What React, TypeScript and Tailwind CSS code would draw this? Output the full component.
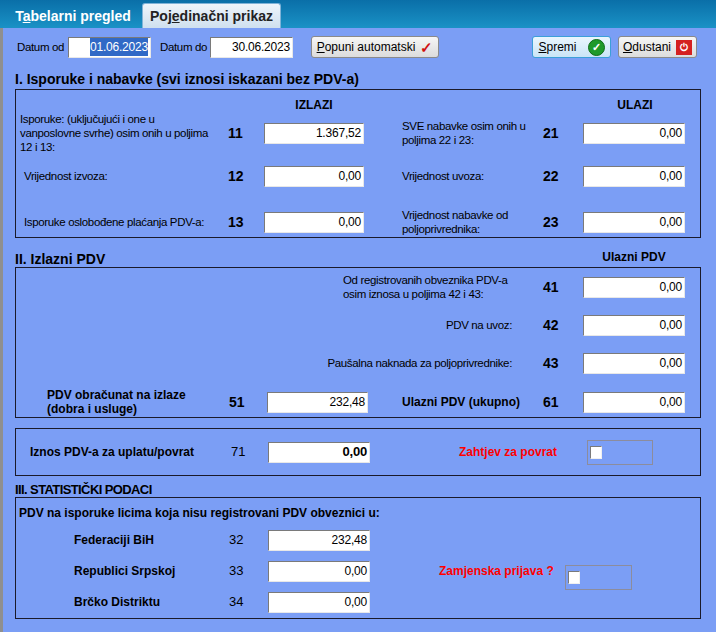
import React from "react";

const F = { fontFamily: '"Liberation Sans", Arial, sans-serif' };

function Inp({ v, w = 100, bold = false, sel = false }: { v: string; w?: number; bold?: boolean; sel?: boolean }) {
  return (
    <div
      style={{ width: w }}
      className={`h-[21px] shrink-0 bg-white border border-t-[#7a7a7a] border-l-[#7a7a7a] border-r-[#e8e8e8] border-b-[#e8e8e8] flex items-center justify-end pr-[2px] text-black tracking-[-0.2px] ${bold ? "font-bold text-[13px]" : "font-normal text-[12px]"}`}
    >
      {sel ? <span className="bg-[#3169c6] text-white">{v}</span> : v}
    </div>
  );
}

function Num({ n, w, pl, bold = true }: { n: string; w: number; pl: number; bold?: boolean }) {
  return (
    <div style={{ width: w, paddingLeft: pl }} className={`shrink-0 ${bold ? "font-bold text-[14px]" : "font-normal text-[13px]"} text-black`}>
      {n}
    </div>
  );
}

function Chk({ w }: { w: number }) {
  return (
    <div style={{ width: w }} className="h-[25px] border border-[#8c8c9c] flex items-center pl-[2px] shrink-0">
      <div className="w-[12px] h-[13px] bg-white border border-t-[#7a7a7a] border-l-[#7a7a7a] border-r-[#f0f0f0] border-b-[#f0f0f0]" />
    </div>
  );
}

function Btn({ children, w, focus = false }: { children: React.ReactNode; w: number; focus?: boolean }) {
  return (
    <div
      style={{ width: w }}
      className={`h-[22px] rounded-[3px] border ${focus ? "border-[#3c9fd8] bg-gradient-to-b from-[#eaf6fd] to-[#c9e4f6]" : "border-[#8a8a8a] bg-gradient-to-b from-[#f6f6f6] to-[#dcdcdc]"} flex items-center justify-center gap-[5px] text-[12px] text-black whitespace-nowrap`}
    >
      {children}
    </div>
  );
}

const L = "text-[11.5px] tracking-[-0.35px] leading-[14px]";

export default function App() {
  return (
    <div style={F} className="w-[716px] h-[632px] bg-[#7b9ef5] overflow-hidden text-black flex flex-col">
      <div className="h-[28px] bg-gradient-to-b from-[#0a6fa8] to-[#1a92c6] flex items-end pl-[4px] shrink-0">
        <div className="h-[24px] w-[138px] flex items-center justify-center text-white font-bold text-[14px] whitespace-nowrap">
          <span>
            T<u>a</u>belarni pregled
          </span>
        </div>
        <div className="h-[25px] w-[139px] bg-gradient-to-b from-[#eef5fb] to-[#cfe0ef] border border-b-0 border-[#7fb3d8] rounded-t-[3px] flex items-center justify-center text-[#222] font-bold text-[14px] whitespace-nowrap">
          <span>
            Poj<u>e</u>dinačni prikaz
          </span>
        </div>
      </div>
      <div className="flex-1 border-l-[3px] border-[#8f8f8f] flex flex-col pl-[12px]">
        <div className="flex items-center h-[22px] mt-[8px] text-[12px] whitespace-nowrap">
          <span className={`ml-[2px] w-[51px] ${L}`}>Datum od</span>
          <Inp v="01.06.2023" w={83} sel />
          <span className={`ml-[9px] w-[50px] ${L}`}>Datum do</span>
          <Inp v="30.06.2023" w={83} />
          <div className="ml-[18px]">
            <Btn w={128}>
              <span>
                <u>P</u>opuni automatski
              </span>
              <span className="text-[#d01010] font-bold text-[15px] leading-none">✓</span>
            </Btn>
          </div>
          <div className="ml-[93px]">
            <Btn w={79} focus>
              <span>
                <u>S</u>premi
              </span>
              <span className="w-[17px] h-[17px] rounded-full bg-[#1f9a2a] border border-[#0d6b15] text-white text-[11px] font-bold flex items-center justify-center ml-[6px]">✓</span>
            </Btn>
          </div>
          <div className="ml-[7px]">
            <Btn w={79}>
              <span>
                <u>O</u>dustani
              </span>
              <span className="w-[16px] h-[15px] bg-[#d42020] text-white text-[10px] font-bold flex items-center justify-center">⏻</span>
            </Btn>
          </div>
        </div>

        <div className="h-[20px] mt-[11px] text-[14px] font-bold flex items-center whitespace-nowrap">I. Isporuke i nabavke (svi iznosi iskazani bez PDV-a)</div>
        <div className="w-[686px] h-[149px] border border-[#1a1a2a] flex flex-col pt-[8px]">
          <div className="h-[14px] flex items-center text-[12px] font-bold">
            <div className="w-[248px]" />
            <div className="w-[100px] text-center">IZLAZI</div>
            <div className="w-[220px]" />
            <div className="w-[102px] text-center">ULAZI</div>
          </div>
          {[
            ["Isporuke: (uključujući i one u vanposlovne svrhe) osim onih u poljima 12 i 13:", "11", "1.367,52", "SVE nabavke osim onih u poljima 22 i 23:", "21", 3, 36],
            ["Vrijednost izvoza:", "12", "0,00", "Vrijednost uvoza:", "22", 8, 36],
            ["Isporuke oslobođene plaćanja PDV-a:", "13", "0,00", "Vrijednost nabavke od poljoprivrednika:", "23", 14, 30],
          ].map(([l, n, v, r, n2, mt, h], i) => (
            <div key={i} style={{ marginTop: mt as number, height: h as number }} className="flex items-center">
              <div className={`w-[204px] ${i === 0 ? "pl-[4px] pr-[4px]" : "pl-[8px] whitespace-nowrap"} ${L}`}>{l}</div>
              <Num n={n as string} w={44} pl={8} />
              <Inp v={v as string} />
              <div className="w-[38px]" />
              <div className={`w-[141px] pr-[10px] ${L}`}>{r}</div>
              <Num n={n2 as string} w={40} pl={0} />
              <Inp v="0,00" w={102} />
            </div>
          ))}
        </div>

        <div className="h-[16px] mt-[13px] flex items-center">
          <div className="w-[568px] text-[14px] font-bold">II. Izlazni PDV</div>
          <div className="w-[102px] text-center text-[12px] font-bold -mt-[4px]">Ulazni PDV</div>
        </div>
        <div className="w-[686px] h-[151px] border border-[#1a1a2a] flex flex-col pt-[4px]">
          {[
            ["Od registrovanih obveznika PDV-a osim iznosa u poljima 42 i 43:", "41", 0],
            ["PDV na uvoz:", "42", 8],
            ["Paušalna naknada za poljoprivrednike:", "43", 8],
          ].map(([l, n, mt], i) => (
            <div key={i} style={{ marginTop: mt as number }} className="h-[30px] flex items-center">
              <div className="w-[304px]" />
              <div className={`w-[192px] ${L} ${i === 0 ? "pl-[23px] pr-[4px] text-left" : "text-right whitespace-nowrap"}`}>{l}</div>
              <div className="w-[31px]" />
              <Num n={n as string} w={40} pl={0} />
              <Inp v="0,00" w={102} />
            </div>
          ))}
          <div className="h-[30px] mt-[9px] flex items-center">
            <div className="w-[212px] pl-[31px] pr-[20px] text-[12px] leading-[14px] font-bold">PDV obračunat na izlaze (dobra i usluge)</div>
            <Num n="51" w={39} pl={1} />
            <Inp v="232,48" w={101} />
            <div className="w-[34px]" />
            <div className="w-[141px] text-[12px] font-bold whitespace-nowrap">Ulazni PDV (ukupno)</div>
            <Num n="61" w={40} pl={0} />
            <Inp v="0,00" w={102} />
          </div>
        </div>

        <div className="w-[686px] h-[48px] mt-[10px] border border-[#1a1a2a] flex items-center text-[12px]">
          <div className="w-[214px] pl-[14px] font-bold whitespace-nowrap">Iznos PDV-a za uplatu/povrat</div>
          <Num n="71" w={38} pl={1} bold={false} />
          <Inp v="0,00" w={102} bold />
          <div className="w-[89px]" />
          <div className="w-[128px] text-[#ff0000] font-bold whitespace-nowrap">Zahtjev za povrat</div>
          <Chk w={66} />
        </div>

        <div className="h-[14px] mt-[7px] text-[13px] font-bold flex items-center tracking-[-0.6px] whitespace-nowrap">III. STATISTIČKI PODACI</div>
        <div className="w-[686px] h-[122px] border border-[#1a1a2a] flex flex-col pt-[5px] text-[12px]">
          <div className="h-[20px] flex items-center pl-[3px] font-bold whitespace-nowrap">PDV na isporuke licima koja nisu registrovani PDV obveznici u:</div>
          {[
            ["Federaciji BiH", "32", "232,48", 2],
            ["Republici Srpskoj", "33", "0,00", 1],
            ["Brčko Distriktu", "34", "0,00", 1],
          ].map(([l, n, v, mt], i) => (
            <div key={i} style={{ marginTop: mt as number }} className="h-[30px] flex items-center">
              <div className="w-[212px] pl-[58px] font-bold whitespace-nowrap">{l}</div>
              <Num n={n as string} w={40} pl={1} bold={false} />
              <Inp v={v as string} w={102} />
              {i === 1 && (
                <>
                  <div className="w-[69px]" />
                  <div className="w-[126px] text-[#ff0000] font-bold whitespace-nowrap">Zamjenska prijava ?</div>
                  <div className="mt-[12px]">
                    <Chk w={67} />
                  </div>
                </>
              )}
            </div>
          ))}
        </div>
      </div>
    </div>
  );
}
